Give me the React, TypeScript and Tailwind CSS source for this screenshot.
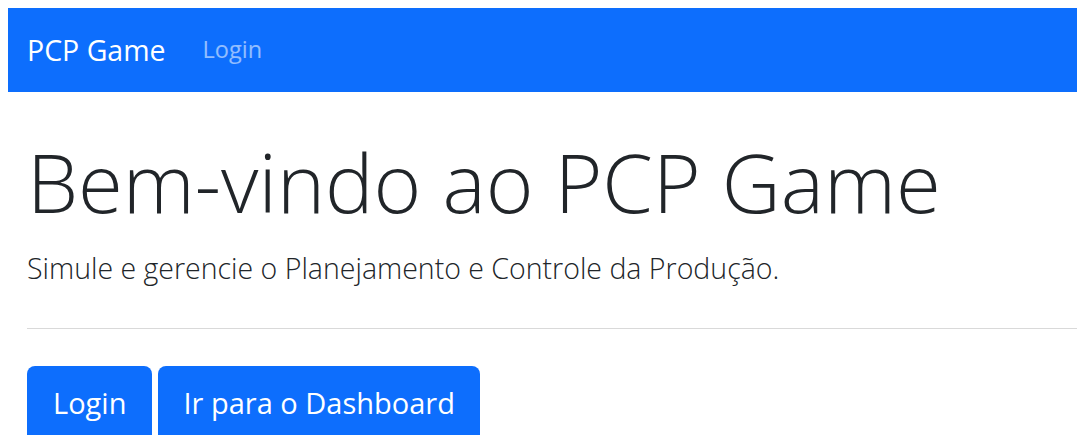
export default function App() {
  return (
    <div className="min-h-screen bg-white pl-2 pt-2 text-[#212529] overflow-hidden" style={{ fontFamily: '"Open Sans", "Noto Sans", sans-serif' }}>
      {/* Top navbar */}
      <nav className="h-[84px] bg-[#0d6efd] flex items-center pl-[19px]">
        <a href="#" className="text-[28.5px] font-normal text-white leading-none mr-[37px]">PCP Game</a>
        <a href="#" className="text-[23.5px] text-white/55 leading-none">Login</a>
      </nav>

      <main className="pl-[19px]">
        <h1 className="mt-[41px] text-[81.5px] font-light leading-[1.2]">Bem-vindo ao PCP Game</h1>
        <p className="mt-4 text-[28.5px] font-light leading-[1.5]">
          Simule e gerencie o Planejamento e Controle da Produção.
        </p>
        <hr className="mt-[38px] border-0 border-t border-[#d9d9d9]" />
        <div className="mt-[37px] flex gap-[6px]">
          <button className="bg-[#0d6efd] text-white text-[29px] leading-[1.5] pt-[15px] pb-5 px-[26px] rounded-lg">Login</button>
          <button className="bg-[#0d6efd] text-white text-[29px] leading-[1.5] pt-[15px] pb-5 px-[25px] rounded-lg">Ir para o Dashboard</button>
        </div>
      </main>
    </div>
  );
}
